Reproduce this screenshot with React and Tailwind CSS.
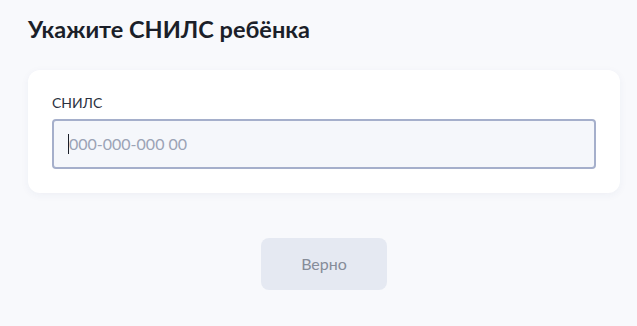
import React from 'react';

const App = () => {
  return (
    <div className="min-h-screen w-full bg-[#f8f9fc] px-[28px] pt-[13px] font-['Lato',sans-serif] text-[#1b1f29]">
      <h1 className="text-[23.5px] font-bold leading-[32px]">Укажите СНИЛС ребёнка</h1>

      {/* SNILS card */}
      <div className="mt-[25px] w-[592px] rounded-[12px] bg-white px-[24px] pt-[24px] pb-[24px] shadow-[0_2px_8px_rgba(40,60,110,0.05)]">
        <label className="block text-[14px] leading-[18px] text-[#2c3140]">СНИЛС</label>
        <div className="mt-[7px] flex h-[50px] w-[544px] items-center rounded-[4px] border-2 border-[#a5afcb] bg-[#f5f7fb] px-[14px]">
          <span className="h-[20px] w-px bg-[#1b1f29]"></span>
          <span className="text-[16px] text-[#9ba3b6]">000-000-000 00</span>
        </div>
      </div>

      <div className="mt-[45px] flex justify-center pl-[11px]">
        <button className="h-[52px] w-[126px] rounded-[8px] bg-[#e5e9f2] text-[16px] text-[#868c99]">
          Верно
        </button>
      </div>
    </div>
  );
};

export default App;
